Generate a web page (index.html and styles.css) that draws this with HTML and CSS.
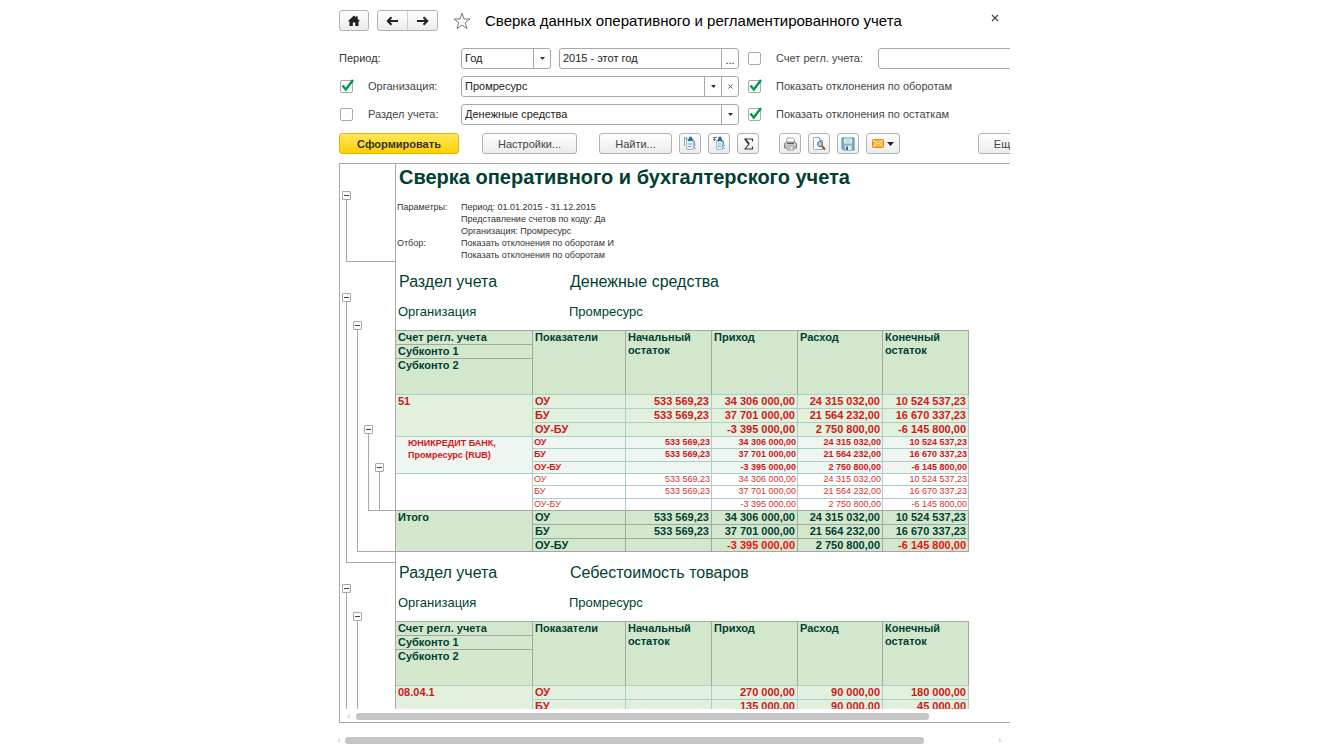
FILE: index.html
```html
<!DOCTYPE html>
<html lang="ru">
<head>
<meta charset="utf-8">
<title>Сверка данных оперативного и регламентированного учета</title>
<link rel="stylesheet" href="styles.css">
</head>
<body>
<main class="app">
  <header class="titlebar">
    <button class="btn btn-home" type="button" aria-label="Домой">
      <svg width="14" height="12" viewBox="0 0 14 12"><path d="M7 0.5 0.8 6.2h1.7V11h3.3V7.5h2.4V11h3.3V6.2h1.7L10.6 3.7V1.3H9v1z" fill="#222"/></svg>
    </button>
    <div class="nav">
      <button class="nav-btn" type="button" aria-label="Назад">
        <svg width="13" height="10" viewBox="0 0 13 10"><path d="M12 5H2M5.5 1.2 1.7 5l3.8 3.8" fill="none" stroke="#222" stroke-width="2"/></svg>
      </button>
      <button class="nav-btn" type="button" aria-label="Вперед">
        <svg width="13" height="10" viewBox="0 0 13 10"><path d="M1 5h10M7.500 1.2 11.300 5 7.500 8.800" fill="none" stroke="#222" stroke-width="2"/></svg>
      </button>
    </div>
    <button class="plain star" type="button" aria-label="В избранное">
      <svg width="18" height="18" viewBox="0 0 18 18"><path d="M9 1.200 11 7h6l-4.800 3.700 1.800 5.900-5-3.600-5 3.600 1.800-5.900L1 7h6z" fill="#fff" stroke="#777" stroke-width="1"/></svg>
    </button>
    <h1 class="page-title">Сверка данных оперативного и регламентированного учета</h1>
    <button class="plain close" type="button" aria-label="Закрыть">
      <svg width="8" height="8" viewBox="0 0 8 8"><path d="M1 1l6 6M7 1 1 7" stroke="#444" stroke-width="1.200"/></svg>
    </button>
  </header>

  <form class="filters">
    <div class="filter-row">
      <label class="strong-label" for="period">Период:</label>
      <div class="fields">
        <div class="combo combo-short">
          <select id="period"><option>Год</option></select>
          <span class="combo-btn"><svg width="5" height="3" viewBox="0 0 5 3"><path d="M0 0h5L2.500 3z" fill="#333"/></svg></span>
        </div>
        <div class="combo">
          <input type="text" value="2015 - этот год" aria-label="Значение периода">
          <button class="combo-btn dots" type="button">...</button>
        </div>
      </div>
      <span class="check"><input type="checkbox" id="acc-on" aria-label="Отбор по счету"></span>
      <div class="account">
        <label for="acc">Счет регл. учета:</label>
        <div class="combo combo-cut"><input type="text" id="acc"></div>
      </div>
    </div>
    <div class="filter-row">
      <div class="check-label">
        <span class="check"><input type="checkbox" id="org-on" checked><svg class="tick" width="14" height="14" viewBox="0 0 14 14"><path d="M1.500 6.500 4.800 10.500 12 1" fill="none" stroke="#009a4e" stroke-width="2.400"/></svg></span>
        <label for="org-on">Организация:</label>
      </div>
      <div class="combo">
        <select aria-label="Организация"><option>Промресурс</option></select>
        <span class="combo-btn"><svg width="5" height="3" viewBox="0 0 5 3"><path d="M0 0h5L2.500 3z" fill="#333"/></svg></span>
        <button class="combo-btn" type="button" aria-label="Очистить"><svg width="5" height="5" viewBox="0 0 5 5"><path d="M.5.5l4 4M4.500.5l-4 4" stroke="#555" stroke-width="1"/></svg></button>
      </div>
      <span class="check"><input type="checkbox" id="dev-turn" checked><svg class="tick" width="14" height="14" viewBox="0 0 14 14"><path d="M1.500 6.500 4.800 10.500 12 1" fill="none" stroke="#009a4e" stroke-width="2.400"/></svg></span>
      <label for="dev-turn">Показать отклонения по оборотам</label>
    </div>
    <div class="filter-row">
      <div class="check-label">
        <span class="check"><input type="checkbox" id="sec-on"></span>
        <label for="sec-on">Раздел учета:</label>
      </div>
      <div class="combo">
        <select aria-label="Раздел учета"><option>Денежные средства</option></select>
        <span class="combo-btn"><svg width="5" height="3" viewBox="0 0 5 3"><path d="M0 0h5L2.500 3z" fill="#333"/></svg></span>
      </div>
      <span class="check"><input type="checkbox" id="dev-rest" checked><svg class="tick" width="14" height="14" viewBox="0 0 14 14"><path d="M1.500 6.500 4.800 10.500 12 1" fill="none" stroke="#009a4e" stroke-width="2.400"/></svg></span>
      <label for="dev-rest">Показать отклонения по остаткам</label>
    </div>
  </form>

  <div class="toolbar">
    <button class="btn btn-primary" type="button">Сформировать</button>
    <button class="btn btn-settings" type="button">Настройки...</button>
    <button class="btn btn-find" type="button">Найти...</button>
    <div class="icon-group">
      <button class="btn btn-icon" type="button" aria-label="Развернуть группы">
        <svg width="15" height="15" viewBox="0 0 15 15"><path d="M1.500 1v9M3.500 1v4M1.500 2h3" stroke="#8fa3ad" fill="none"/><path d="M3.500 3.500h7v10h-7z" fill="#dceef7" stroke="#9cc0d2"/><path d="M5.500 5 7 1.500h1L9.500 5M6 4h3" fill="none" stroke="#1d5b85" stroke-width="1.400"/><path d="M5 8h4M5 10.500h3" stroke="#7bb6d6"/><path d="M11.500 5v4M13 9.500c-2.500-1-2.500 3.500 0 3" fill="none" stroke="#8796a3"/></svg>
      </button>
      <button class="btn btn-icon" type="button" aria-label="Свернуть группы">
        <svg width="15" height="15" viewBox="0 0 15 15"><path d="M1 1.500h4M1 3.500h3M2.500 1v4" stroke="#6f7f88" fill="none"/><path d="M4.500 4.500h6v9h-6z" fill="#dceef7" stroke="#9cc0d2"/><path d="M6 5.500 7.500 1.500h1L10 5.500M6.500 4h3" fill="none" stroke="#1d5b85" stroke-width="1.400"/><path d="M6 8h3M6 10.500h3" stroke="#7bb6d6"/><path d="M11.500 5v4M13 9.500c-2.500-1-2.500 3.500 0 3" fill="none" stroke="#8796a3"/></svg>
      </button>
      <button class="btn btn-icon" type="button" aria-label="Сумма">
        <svg width="11" height="12" viewBox="0 0 11 12"><path d="M9.500 3.500V1H1.500M9.500 8.500V11H1.500" fill="none" stroke="#333" stroke-width="1.200"/><path d="M2 1 6 6" stroke="#333" stroke-width="2"/><path d="M6 6 2 11" stroke="#333" stroke-width="1.200"/></svg>
      </button>
    </div>
    <div class="icon-group">
      <button class="btn btn-icon" type="button" aria-label="Печать">
        <svg width="15" height="14" viewBox="0 0 15 14"><path d="M4 1h6l1.500 1.500V6h-8z" fill="#fff" stroke="#a3adb7"/><path d="M1.500 6.500 3.500 5h8l2 1.500v4.500h-12z" fill="#cfc9c4" stroke="#857d79"/><path d="M4 6.500h7" stroke="#555"/><path d="M4 9h7v4H4z" fill="#eef6fb" stroke="#999"/><path d="M5 11h3" stroke="#5a9bd0"/><path d="M9 11h1.500" stroke="#e27b3a"/></svg>
      </button>
      <button class="btn btn-icon" type="button" aria-label="Предварительный просмотр">
        <svg width="14" height="15" viewBox="0 0 14 15"><path d="M1.500 1.500h6l3 3v9h-9z" fill="#fff" stroke="#8db4cc"/><path d="M7.500 1.500v3h3" fill="#d5e8f3" stroke="#8db4cc"/><circle cx="8" cy="8" r="2.500" fill="#a9d4ef" stroke="#4d6a80"/><path d="M9.800 10 13 13.500" stroke="#8a5a2b" stroke-width="2"/></svg>
      </button>
      <button class="btn btn-icon" type="button" aria-label="Сохранить">
        <svg width="14" height="14" viewBox="0 0 14 14"><path d="M1 1h12v12H2.500L1 11.500z" fill="#7fb0cb" stroke="#5c8aa6"/><path d="M3 1.500h8V6.500H3z" fill="#eaf4f9"/><path d="M4 3h6M4 5h6" stroke="#a5c8da"/><path d="M4 8.500h6.500V13H4z" fill="#dfe9ee"/><path d="M5 9.500h2V13H5z" fill="#3e6a86"/></svg>
      </button>
      <button class="btn btn-mail" type="button" aria-label="Отправить">
        <svg width="12" height="9" viewBox="0 0 12 9"><path d="M.5.5h11v8H.5z" fill="#fbb53c" stroke="#e08f1c"/><path d="M.5.5 6 5 11.500.5M.5 8.500l4-4M11.500 8.500l-4-4" fill="none" stroke="#fff0c4" stroke-width=".9"/></svg>
        <svg width="7" height="4" viewBox="0 0 7 4"><path d="M0 0h7L3.500 4z" fill="#222"/></svg>
      </button>
    </div>
    <button class="btn btn-more" type="button">Еще</button>
  </div>

  <section class="report">
    <div class="sheet">
      <div class="band">
        <div class="gutter">
          <div class="node level-1 node-params"><button class="fold" type="button" aria-label="Свернуть"></button><span class="stem"></span></div>
        </div>
        <div class="content">
          <h2 class="report-title">Сверка оперативного и бухгалтерского учета</h2>
          <dl class="params">
            <dt>Параметры:</dt>
            <dd>Период: 01.01.2015 - 31.12.2015</dd>
            <dd>Представление счетов по коду: Да</dd>
            <dd>Организация: Промресурс</dd>
            <dt>Отбор:</dt>
            <dd>Показать отклонения по оборотам И</dd>
            <dd>Показать отклонения по оборотам</dd>
          </dl>
        </div>
      </div>

      <div class="band">
        <div class="gutter">
          <div class="node level-1 node-section"><button class="fold" type="button" aria-label="Свернуть"></button><span class="stem"></span></div>
          <div class="node level-2 node-table"><button class="fold" type="button" aria-label="Свернуть"></button><span class="stem"></span></div>
          <div class="node level-3 node-account"><button class="fold" type="button" aria-label="Свернуть"></button><span class="stem"></span></div>
          <div class="node level-4 node-sub"><button class="fold" type="button" aria-label="Свернуть"></button><span class="stem"></span></div>
        </div>
        <div class="content">
          <div class="pair pair-section"><span>Раздел учета</span><span>Денежные средства</span></div>
          <div class="pair pair-org"><span>Организация</span><span>Промресурс</span></div>
          <table class="grid">
            <colgroup><col class="c-acc"><col class="c-ind"><col class="c-num"><col class="c-num"><col class="c-out"><col class="c-num"></colgroup>
            <thead>
              <tr><th>Счет регл. учета</th><th rowspan="3">Показатели</th><th rowspan="3">Начальный остаток</th><th rowspan="3">Приход</th><th rowspan="3">Расход</th><th rowspan="3">Конечный остаток</th></tr>
              <tr><th>Субконто 1</th></tr>
              <tr class="tall"><th>Субконто 2</th></tr>
            </thead>
            <tbody class="lvl-a">
              <tr><th rowspan="3">51</th><td>ОУ</td><td>533 569,23</td><td>34 306 000,00</td><td>24 315 032,00</td><td>10 524 537,23</td></tr>
              <tr><td>БУ</td><td>533 569,23</td><td>37 701 000,00</td><td>21 564 232,00</td><td>16 670 337,23</td></tr>
              <tr><td>ОУ-БУ</td><td></td><td>-3 395 000,00</td><td>2 750 800,00</td><td>-6 145 800,00</td></tr>
            </tbody>
            <tbody class="lvl-b small">
              <tr><th rowspan="3">ЮНИКРЕДИТ БАНК,<br>Промресурс (RUB)</th><td>ОУ</td><td>533 569,23</td><td>34 306 000,00</td><td>24 315 032,00</td><td>10 524 537,23</td></tr>
              <tr><td>БУ</td><td>533 569,23</td><td>37 701 000,00</td><td>21 564 232,00</td><td>16 670 337,23</td></tr>
              <tr><td>ОУ-БУ</td><td></td><td>-3 395 000,00</td><td>2 750 800,00</td><td>-6 145 800,00</td></tr>
            </tbody>
            <tbody class="lvl-c small">
              <tr><th rowspan="3"></th><td>ОУ</td><td>533 569,23</td><td>34 306 000,00</td><td>24 315 032,00</td><td>10 524 537,23</td></tr>
              <tr><td>БУ</td><td>533 569,23</td><td>37 701 000,00</td><td>21 564 232,00</td><td>16 670 337,23</td></tr>
              <tr><td>ОУ-БУ</td><td></td><td>-3 395 000,00</td><td>2 750 800,00</td><td>-6 145 800,00</td></tr>
            </tbody>
            <tbody class="total">
              <tr><th rowspan="3">Итого</th><td>ОУ</td><td>533 569,23</td><td>34 306 000,00</td><td>24 315 032,00</td><td>10 524 537,23</td></tr>
              <tr><td>БУ</td><td>533 569,23</td><td>37 701 000,00</td><td>21 564 232,00</td><td>16 670 337,23</td></tr>
              <tr><td>ОУ-БУ</td><td></td><td class="neg">-3 395 000,00</td><td>2 750 800,00</td><td class="neg">-6 145 800,00</td></tr>
            </tbody>
          </table>
        </div>
      </div>

      <div class="band">
        <div class="gutter">
          <div class="node level-1 node-section"><button class="fold" type="button" aria-label="Свернуть"></button><span class="stem"></span></div>
          <div class="node level-2 node-table"><button class="fold" type="button" aria-label="Свернуть"></button><span class="stem"></span></div>
        </div>
        <div class="content">
          <div class="pair pair-section"><span>Раздел учета</span><span>Себестоимость товаров</span></div>
          <div class="pair pair-org"><span>Организация</span><span>Промресурс</span></div>
          <table class="grid">
            <colgroup><col class="c-acc"><col class="c-ind"><col class="c-num"><col class="c-num"><col class="c-out"><col class="c-num"></colgroup>
            <thead>
              <tr><th>Счет регл. учета</th><th rowspan="3">Показатели</th><th rowspan="3">Начальный остаток</th><th rowspan="3">Приход</th><th rowspan="3">Расход</th><th rowspan="3">Конечный остаток</th></tr>
              <tr><th>Субконто 1</th></tr>
              <tr class="tall"><th>Субконто 2</th></tr>
            </thead>
            <tbody class="lvl-a">
              <tr><th rowspan="2">08.04.1</th><td>ОУ</td><td></td><td>270 000,00</td><td>90 000,00</td><td>180 000,00</td></tr>
              <tr><td>БУ</td><td></td><td>135 000,00</td><td>90 000,00</td><td>45 000,00</td></tr>
            </tbody>
          </table>
        </div>
      </div>
    </div>
    <div class="hscroll hscroll-inner">
      <svg width="3" height="5" viewBox="0 0 3 5"><path d="M3 0v5L0 2.500z" fill="#ddd"/></svg>
      <span class="thumb"></span>
    </div>
  </section>

  <div class="hscroll hscroll-outer">
    <svg width="3" height="5" viewBox="0 0 3 5"><path d="M3 0v5L0 2.500z" fill="#ddd"/></svg>
    <span class="thumb"></span>
    <svg class="arrow-right" width="3" height="5" viewBox="0 0 3 5"><path d="M0 0v5l3-2.500z" fill="#ddd"/></svg>
  </div>
</main>
</body>
</html>
```

FILE: styles.css
```css
* { box-sizing: border-box; }

body {
  margin: 0;
  background: #fff;
  color: #444;
  font: 11px/14px "Liberation Sans", Arial, sans-serif;
}

button, input, select { font: inherit; color: inherit; }

svg { display: block; flex: none; }

.app {
  display: flex;
  flex-direction: column;
  height: 100vh;
  max-width: 681px;
  margin: 0 auto;
  padding: 10px 0 2px 10px;
  overflow: hidden;
}

/* Buttons */
.btn {
  display: flex;
  align-items: center;
  justify-content: center;
  flex: none;
  height: 21px;
  padding: 0;
  border: 1px solid #b2b2b2;
  border-radius: 3px;
  background: linear-gradient(#fff, #ececec);
  color: #444;
}

.plain { padding: 0; border: 0; background: none; }

/* Title bar */
.titlebar { display: flex; align-items: center; flex: none; height: 21px; }
.btn-home { width: 30px; margin-right: 8px; }
.nav {
  display: flex;
  width: 61px;
  height: 21px;
  margin-right: 15px;
  border: 1px solid #b2b2b2;
  border-radius: 3px;
  background: linear-gradient(#fff, #ececec);
}
.nav-btn {
  display: flex;
  flex: 1;
  align-items: center;
  justify-content: center;
  padding: 0;
  border: 0;
  background: none;
}
.nav-btn + .nav-btn { border-left: 1px solid #ccc; }
.star { margin-right: 14px; }
.page-title {
  flex: 1;
  margin: 0;
  color: #000;
  font-size: 15px;
  font-weight: 400;
  line-height: 20px;
  white-space: nowrap;
}
.close { align-self: flex-start; margin: 4px 11px 0 0; }

/* Filters */
.filters { display: grid; gap: 7px; flex: none; margin-top: 17px; }
.filter-row {
  display: grid;
  grid-template-columns: 122px 278px 13px 1fr;
  align-items: center;
  height: 21px;
}
.filter-row > .check { margin-left: 9px; }
.filter-row > .check + * { margin-left: 24px; }
.filter-row label { padding-bottom: 1px; }
.strong-label { color: #333; }
.check-label { display: flex; align-items: center; gap: 15px; padding-left: 1px; }
.fields { display: flex; gap: 8px; }
.account { display: flex; align-items: center; }
.account label { flex: none; width: 102px; }

.combo {
  display: flex;
  flex: 1;
  min-width: 0;
  height: 21px;
  border: 1px solid #a8a8a8;
  border-radius: 3px;
  background: #fff;
  color: #222;
}
.combo-short { flex: none; width: 90px; }
.combo-cut { margin-right: -10px; }
.combo input, .combo select {
  flex: 1;
  min-width: 0;
  padding: 0 0 1px 3px;
  border: 0;
  outline: 0;
  background: none;
  appearance: none;
}
.combo-btn {
  display: flex;
  flex: none;
  align-items: center;
  justify-content: center;
  width: 17px;
  padding: 0;
  border: 0;
  border-left: 1px solid #a8a8a8;
  background: none;
}
.dots { padding-top: 3px; }

.check { position: relative; display: block; width: 13px; height: 13px; }
.check input {
  display: block;
  width: 13px;
  height: 13px;
  margin: 0;
  border: 1px solid #a8a8a8;
  border-radius: 2px;
  background: #fff;
  appearance: none;
}
.tick { position: absolute; left: 1px; top: -1px; pointer-events: none; }

/* Toolbar */
.toolbar { display: flex; flex: none; height: 21px; margin-top: 8px; }
.btn-primary {
  width: 120px;
  margin-right: 23px;
  border-color: #e0b800;
  background: linear-gradient(#ffe75a, #ffd000);
  color: #333;
  font-weight: 700;
}
.btn-settings { width: 95px; margin-right: 22px; }
.btn-find { width: 73px; margin-right: 7px; }
.icon-group { display: flex; gap: 7px; margin-right: 20px; }
.btn-icon { width: 22px; }
.btn-mail { gap: 3px; width: 34px; }
.btn-more { width: 54px; margin-left: auto; margin-right: -22px; }

/* Report */
.report {
  display: flex;
  flex: 1;
  flex-direction: column;
  min-height: 0;
  margin-top: 9px;
  border: 1px solid #a8a8a8;
  border-right: 0;
}
.sheet { flex: 1; min-height: 0; overflow: hidden; color: #003f33; }
.band { display: flex; }
.content { flex: 1; min-width: 0; padding-bottom: 11px; }

.gutter {
  display: grid;
  grid-template-columns: 11px 11px 11px 1fr;
  flex: none;
  width: 56px;
  padding-left: 2px;
  border-right: 1px solid #a8a8a8;
}
.node { display: flex; flex-direction: column; grid-row: 1; }
.level-1 { grid-column: 1 / -1; }
.level-2 { grid-column: 2 / -1; }
.level-3 { grid-column: 3 / -1; }
.level-4 { grid-column: 4 / -1; }
.node-params { margin: 27px 0 10px; }
.node-section { margin: 21px 0 0; }
.node-table { margin: 49px 0 11px; }
.node-account { margin: 153px 0 52px; }
.node-sub { margin: 191px 0 52px; }
.fold {
  display: flex;
  flex: none;
  align-items: center;
  justify-content: center;
  width: 9px;
  height: 9px;
  padding: 0;
  border: 1px solid #a8a8a8;
  border-radius: 1px;
  background: #fff;
}
.fold::before { content: ""; width: 5px; height: 1px; background: #444; }
.stem {
  flex: 1;
  margin-left: 4px;
  border-left: 1px solid #a8a8a8;
  border-bottom: 1px solid #a8a8a8;
}

.report-title {
  margin: 0;
  padding-left: 3px;
  font-size: 20px;
  line-height: 26px;
  white-space: nowrap;
}
.params {
  display: grid;
  grid-template-columns: 64px 1fr;
  margin: 11px 0 0 1px;
  color: #333;
  font-size: 9px;
  line-height: 12px;
}
.params dt { grid-column: 1; }
.params dd { grid-column: 2; margin: 0; }

.pair { display: grid; grid-template-columns: 171px 1fr; line-height: 20px; }
.pair-section { padding-left: 3px; font-size: 16px; }
.pair-org { margin: 10px 0 8px; padding-left: 2px; font-size: 13px; }

.grid {
  width: 573px;
  table-layout: fixed;
  border-collapse: separate;
  border-spacing: 0;
  border-top: 1px solid #a0a8a0;
  font-weight: 700;
  line-height: 13px;
}
.c-acc { width: 137px; }
.c-ind { width: 93px; }
.c-num { width: 86px; }
.c-out { width: 85px; }
.grid th, .grid td {
  height: 14px;
  padding: 0 2px;
  border: 0 solid #a9cfc6;
  border-width: 0 1px 1px 0;
  text-align: left;
  vertical-align: top;
  white-space: nowrap;
}
.grid thead th { border-color: #a0a8a0; background: #d3e7cc; white-space: normal; }
.grid thead .tall th, .grid thead th[rowspan] { border-bottom-color: #a9cfc6; }
.grid .tall th { height: 36px; }
.grid td + td { text-align: right; }
.lvl-a { background: #e2f0de; color: #d01818; }
.lvl-b { background: #eff5f1; color: #d01818; }
.lvl-c { color: #d83030; font-weight: 400; }
.grid .small th, .grid .small td { height: 12px; padding: 0 1px; }
.grid .small tr:nth-child(2) td { height: 13px; }
.small { font-size: 9px; line-height: 11px; }
.grid .small th { padding-left: 12px; line-height: 12px; }
.grid .lvl-c tr:last-child td, .grid .lvl-c th { border-bottom-color: #a0a8a0; }
.total { background: #d3e7cc; }
.grid .total th, .grid .total td { border-color: #a0a8a0; }
.grid .total tr:last-child td { height: 13px; line-height: 12px; }
.grid .total .neg { color: #f01010; }

/* Horizontal scroll bars */
.hscroll { display: flex; align-items: center; flex: none; height: 8px; }
.thumb { height: 7px; border-radius: 3px; background: #c6c6c6; }
.hscroll-inner { height: 13px; padding: 1px 0 0 7px; gap: 6px; }
.hscroll-inner .thumb { width: 86.5%; }
.hscroll-outer { margin: 13px 0 0 -2px; gap: 5px; }
.hscroll-outer .thumb { width: 86%; }
.arrow-right { margin: 0 8px 0 auto; }
```
